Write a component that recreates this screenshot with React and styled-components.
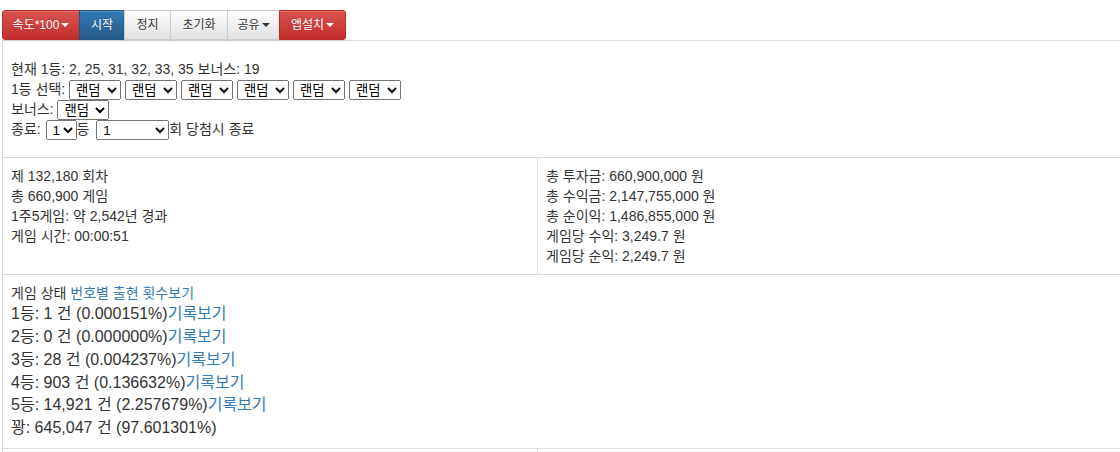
import React from 'react';
import styled, { createGlobalStyle, css } from 'styled-components';

const GlobalStyle = createGlobalStyle`
  html, body {
    margin: 0;
    overflow: hidden;
    background: #fff;
  }
  body {
    font-family: "Liberation Sans", "Noto Sans CJK KR", sans-serif;
    font-size: 14px;
    line-height: 1.42857;
    color: #333;
  }
`;

const Page = styled.div`
  padding: 10px 0 0 2px;
  width: 1140px;
`;

const BtnGroup = styled.div`
  display: inline-flex;
  vertical-align: middle;
`;

const variants = {
  danger: css`
    color: #fff;
    text-shadow: 0 -1px 0 rgba(0, 0, 0, 0.2);
    background-image: linear-gradient(to bottom, #d9534f 0, #c12e2a 100%);
    border-color: #b92c28;
  `,
  primary: css`
    color: #fff;
    text-shadow: 0 -1px 0 rgba(0, 0, 0, 0.2);
    background-image: linear-gradient(to bottom, #337ab7 0, #265a88 100%);
    border-color: #245580;
  `,
  default: css`
    color: #333;
    text-shadow: 0 1px 0 #fff;
    background-image: linear-gradient(to bottom, #fff 0, #e0e0e0 100%);
    border-color: #ccc;
  `,
};

const Btn = styled.button`
  font-family: "Liberation Sans", "Noto Sans CJK KR", sans-serif;
  font-size: 12px;
  line-height: 1.5;
  padding: 5px 0;
  width: ${(p) => p.$w}px;
  border: 1px solid;
  border-radius: 0;
  margin-left: -1px;
  cursor: pointer;
  display: inline-flex;
  align-items: center;
  justify-content: center;
  box-shadow: inset 0 1px 0 rgba(255, 255, 255, 0.15), 0 1px 1px rgba(0, 0, 0, 0.075);
  ${(p) => variants[p.$kind || 'default']}
  &:first-child {
    margin-left: 0;
    border-top-left-radius: 3px;
    border-bottom-left-radius: 3px;
  }
  &:last-child {
    border-top-right-radius: 3px;
    border-bottom-right-radius: 3px;
  }
`;

const Caret = styled.span`
  display: inline-block;
  width: 0;
  height: 0;
  margin-left: 2px;
  border-top: 4px solid;
  border-right: 4px solid transparent;
  border-left: 4px solid transparent;
`;

const Table = styled.table`
  border-collapse: collapse;
  width: 100%;
  table-layout: fixed;
`;

const Cell = styled.td`
  border: 1px solid #ddd;
  padding: ${(p) => (p.$roomy ? '18px 8px' : '8px')};
  vertical-align: top;
  height: ${(p) => p.$h || 'auto'};
`;

const Line = styled.div`
  font-size: ${(p) => (p.$big ? '16px' : '14px')};
  line-height: ${(p) => (p.$big ? '22.86px' : '20px')};
  height: ${(p) => (p.$big ? '22.86px' : '20px')};
  white-space: nowrap;
`;

const Select = styled.select`
  font-family: "Liberation Sans", "Noto Sans CJK KR", sans-serif;
  font-size: 13.33px;
  width: ${(p) => p.$w || 52}px;
  height: 20px;
  margin: 0 ${(p) => (p.$tight ? 0 : 4)}px 0 ${(p) => p.$ml || 0}px;
  padding: 0 0 0 2px;
  vertical-align: middle;
  color: #000;
`;

const Link = styled.a`
  color: #337ab7;
  text-decoration: none;
  cursor: pointer;
`;

const RandomSelect = () => (
  <Select>
    <option>랜덤</option>
  </Select>
);

const prizes = [
  ['1등', '1', '0.000151'],
  ['2등', '0', '0.000000'],
  ['3등', '28', '0.004237'],
  ['4등', '903', '0.136632'],
  ['5등', '14,921', '2.257679'],
];

export default function App() {
  return (
    <>
      <GlobalStyle />
      <Page>
        <BtnGroup>
          <Btn $kind="danger" $w={78}>속도*100<Caret /></Btn>
          <Btn $kind="primary" $w={46}>시작</Btn>
          <Btn $w={47}>정지</Btn>
          <Btn $w={58}>초기화</Btn>
          <Btn $w={53}>공유<Caret /></Btn>
          <Btn $kind="danger" $w={67}>앱설치<Caret /></Btn>
        </BtnGroup>
        <Table>
          <colgroup>
            <col style={{ width: '535px' }} />
            <col />
          </colgroup>
          <tbody>
            <tr>
              <Cell colSpan={2} $roomy>
                <Line>현재 1등: 2, 25, 31, 32, 33, 35 보너스: 19</Line>
                <Line>
                  1등 선택: <RandomSelect /><RandomSelect /><RandomSelect /><RandomSelect /><RandomSelect /><RandomSelect />
                </Line>
                <Line>
                  보너스: <RandomSelect />
                </Line>
                <Line>
                  종료: <Select $w={31} $ml={1} $tight><option>1</option></Select>등 <Select $w={73} $ml={3} $tight><option>1</option></Select>회 당첨시 종료
                </Line>
              </Cell>
            </tr>
            <tr>
              <Cell>
                <Line>제 132,180 회차</Line>
                <Line>총 660,900 게임</Line>
                <Line>1주5게임: 약 2,542년 경과</Line>
                <Line>게임 시간: 00:00:51</Line>
              </Cell>
              <Cell>
                <Line>총 투자금: 660,900,000 원</Line>
                <Line>총 수익금: 2,147,755,000 원</Line>
                <Line>총 순이익: 1,486,855,000 원</Line>
                <Line>게임당 수익: 3,249.7 원</Line>
                <Line>게임당 순익: 2,249.7 원</Line>
              </Cell>
            </tr>
            <tr>
              <Cell colSpan={2}>
                <Line>게임 상태 <Link>번호별 출현 횟수보기</Link></Line>
                {prizes.map(([rank, count, pct]) => (
                  <Line $big key={rank}>
                    {rank}: {count} 건 ({pct}%)<Link>기록보기</Link>
                  </Line>
                ))}
                <Line $big>꽝: 645,047 건 (97.601301%)</Line>
              </Cell>
            </tr>
            <tr>
              <Cell $h="40px" />
              <Cell $h="40px" />
            </tr>
          </tbody>
        </Table>
      </Page>
    </>
  );
}
